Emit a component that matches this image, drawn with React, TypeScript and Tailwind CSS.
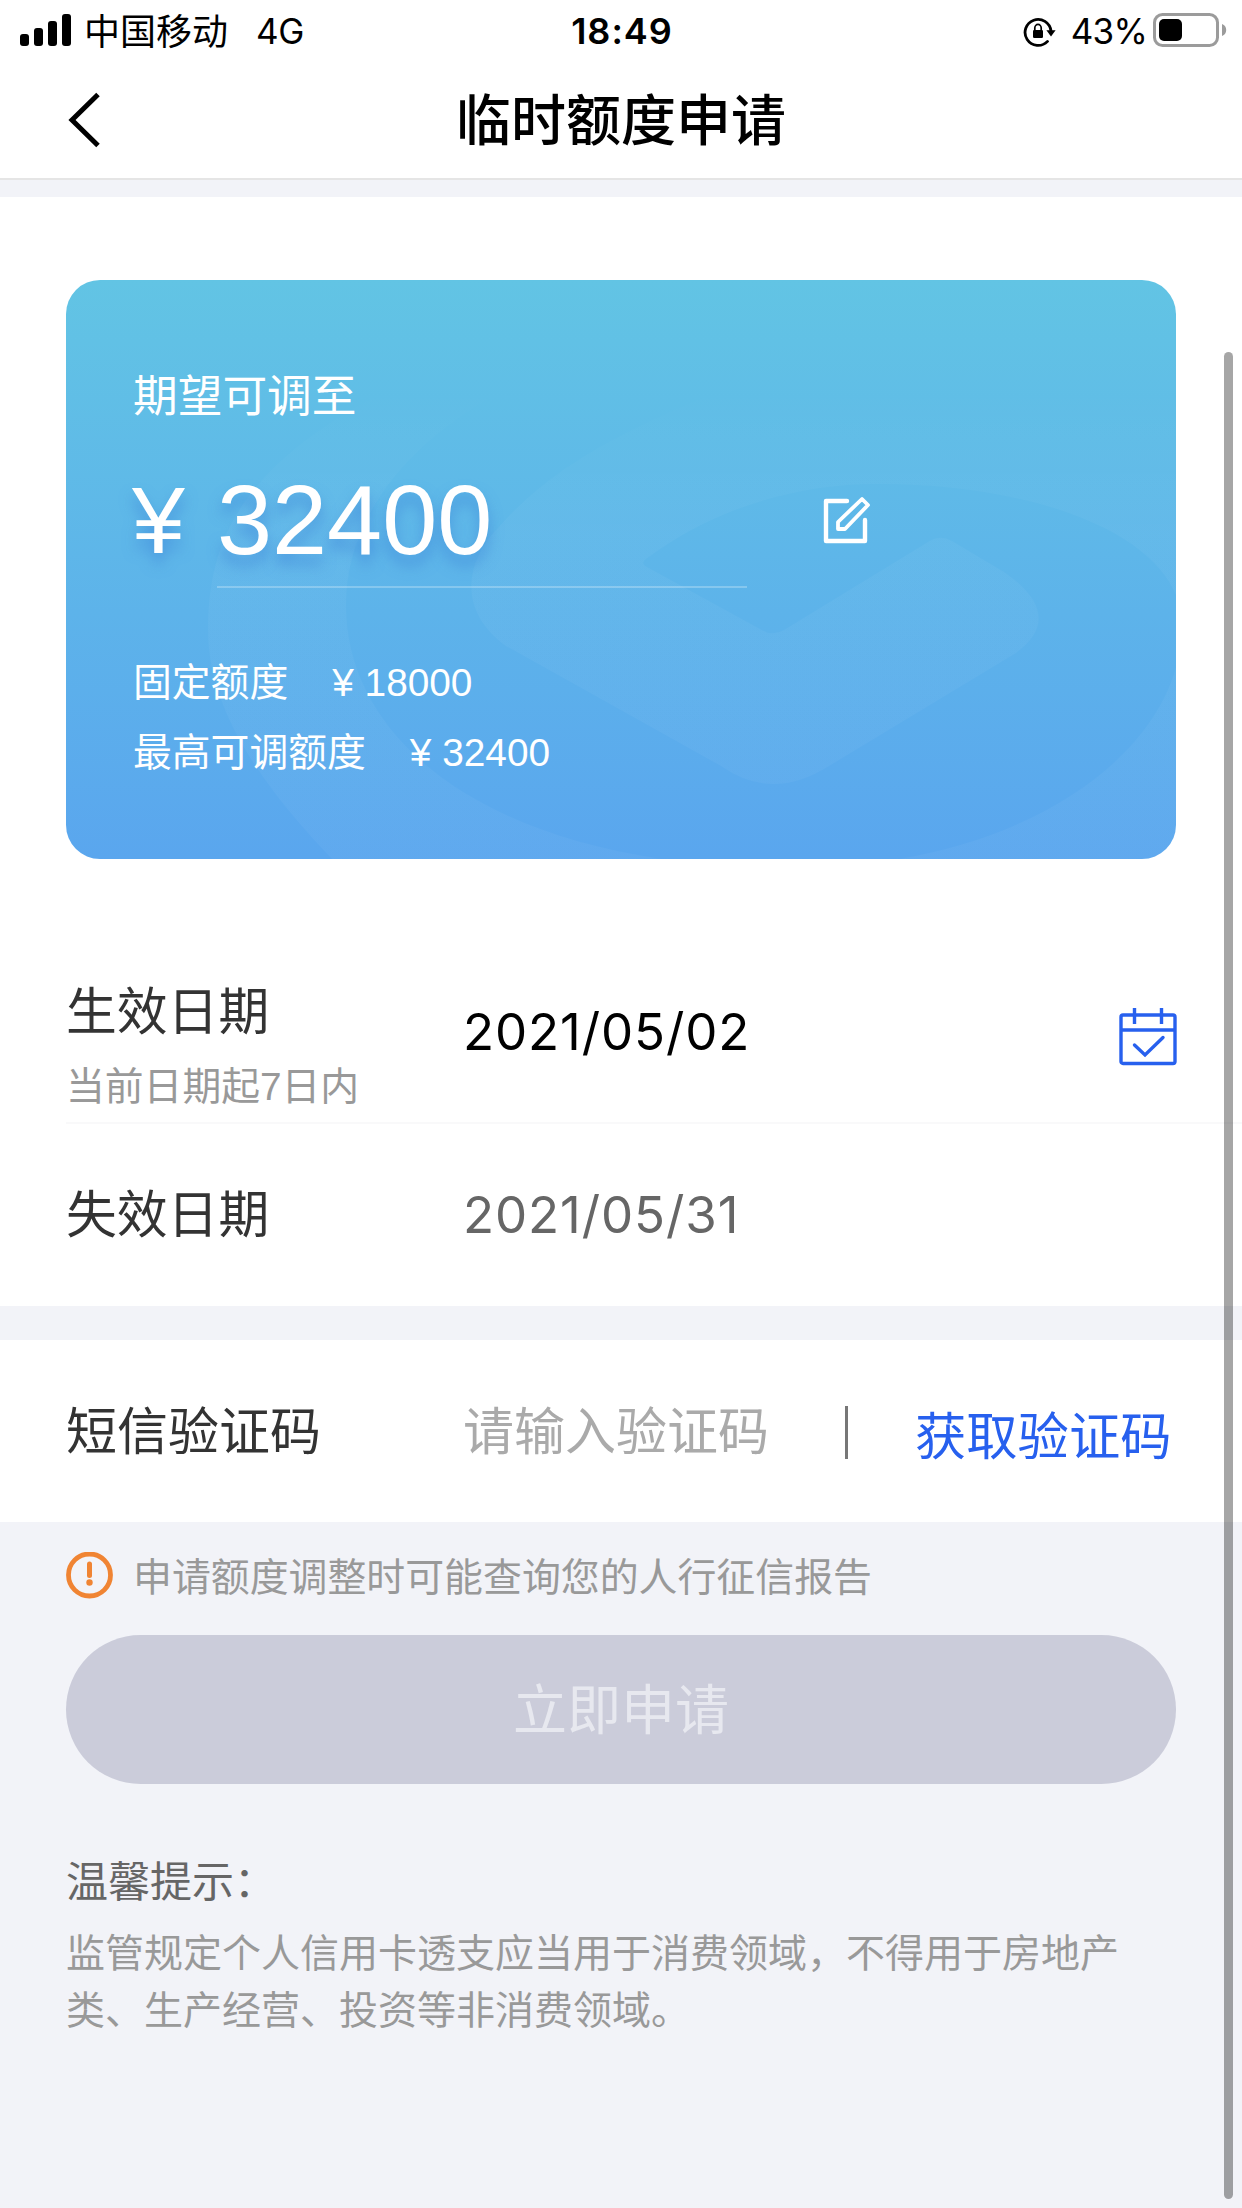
import React, { useState } from 'react';

function StatusBar() {
  return (
    <div className="h-[62px] shrink-0 flex items-center justify-between pl-5 pr-[15px] text-[36px] leading-[44px] text-black">
      <div className="w-[540px] flex items-center">
        <div className="flex items-end gap-[5px] h-8 -mt-0.5">
          <span className="w-[9px] h-3 rounded-[3px] bg-black" />
          <span className="w-[9px] h-[18px] rounded-[3px] bg-black" />
          <span className="w-[9px] h-[25px] rounded-[3px] bg-black" />
          <span className="w-[9px] h-8 rounded-[3px] bg-black" />
        </div>
        <span className="ml-[13px] pt-[3px]">中国移动</span>
        <span className="ml-[28px] font-['Inter',sans-serif] text-[35px] tracking-[-0.5px]">4G</span>
      </div>
      <span className="pr-[3px] font-['Inter',sans-serif] text-[36px] font-semibold tracking-[1px]">18:49</span>
      <div className="w-[540px] flex items-center justify-end">
        <svg width="33" height="31" viewBox="0 0 33 31" fill="none">
          <path d="M24.5 25.4A13 13 0 1 1 28 15" stroke="black" strokeWidth="2.8" strokeLinecap="round" />
          <path d="M23.4 14.2h9.2L28 20.6z" fill="black" />
          <rect x="10" y="14" width="10" height="8" rx="1.2" fill="black" />
          <path d="M11.8 15v-3a3.2 3.6 0 0 1 6.4 0v3" stroke="black" strokeWidth="1.7" />
        </svg>
        <span className="ml-[15px] font-['Inter',sans-serif] text-[35px] tracking-[-0.8px]">43%</span>
        <svg className="ml-[6px] -mt-0.5" width="74" height="34" viewBox="0 0 74 34" fill="none">
          <rect x="1.5" y="1.5" width="63" height="31" rx="8" stroke="#9b9b9b" strokeWidth="3" />
          <rect x="6" y="6" width="23" height="22" rx="5" fill="black" />
          <path d="M69 11a6.4 6.4 0 0 1 0 12z" fill="#9b9b9b" />
        </svg>
      </div>
    </div>
  );
}

function Header() {
  return (
    <div className="h-[118px] shrink-0 flex items-center px-[66px] border-b-2 border-[#e5e5e5]">
      <button className="w-10 h-[56px]">
        <svg width="36" height="56" viewBox="0 0 36 56" fill="none">
          <path d="M32 2.5L6 28 32 53.5" stroke="black" strokeWidth="5" />
        </svg>
      </button>
      <h1 className="flex-1 pr-10 pt-[2px] text-center text-[55px] leading-[64px] font-medium text-black">临时额度申请</h1>
    </div>
  );
}

// Faint logo behind the card content, faded out towards the top
function CardWatermark() {
  return (
    <svg className="absolute inset-0" width="1110" height="579" viewBox="0 0 1110 579">
      <defs>
        <linearGradient id="fade" x1="0" y1="0" x2="0" y2="1">
          <stop offset="0.18" stopColor="white" stopOpacity="0" />
          <stop offset="0.42" stopColor="white" stopOpacity="0.035" />
          <stop offset="1" stopColor="white" stopOpacity="0.035" />
        </linearGradient>
      </defs>
      <path
        fill="url(#fade)"
        fillRule="evenodd"
        d="M0 0H1110V579H266C190 500 142 425 142 350C142 245 190 180 320 110L420 0H0Z
           M540 70C370 120 280 220 280 325C280 470 440 588 724 588C960 588 1116 470 1116 345C1116 260 980 204 812 204C720 204 640 234 580 279Q574 283 581 287L694 349Q706 357 718 350L862 262Q874 254 886 261L938 292C982 322 982 350 950 373L763 486Q706 522 655 486L440 366C390 330 400 280 433 247C500 170 600 130 760 70Z"
      />
    </svg>
  );
}

function QuotaCard() {
  return (
    <div className="relative h-[579px] mx-[66px] rounded-[34px] overflow-hidden bg-gradient-to-b from-[#62c4e4] to-[#5aa6ee] text-white">
      <CardWatermark />
      <div className="relative pl-[67px] pt-[87px]">
        <p className="text-[44.7px] leading-[60px]">期望可调至</p>
        <div className="mt-[25px] flex items-center">
          <span className="w-[84px] -ml-px mr-px text-[95px] leading-[132px] [text-shadow:0_10px_14px_rgba(60,130,215,0.6)]">¥</span>
          <div className="w-[530px] h-[136px] border-b-2 border-white/25">
            <span className="text-[99px] leading-[136px] [text-shadow:0_10px_14px_rgba(60,130,215,0.6)]">32400</span>
          </div>
          <button className="ml-[75px]">
            <svg width="50" height="50" viewBox="0 0 50 50" fill="none" stroke="white" strokeWidth="4.4" strokeLinecap="round" strokeLinejoin="round">
              <path d="M25 6H4v40h39V25" />
              <path d="M16 34v-7L40 4l6 6-23 24z" strokeWidth="3.8" />
            </svg>
          </button>
        </div>
        <p className="mt-[65px] flex text-[38.8px] leading-[60px]">
          固定额度<span className="ml-[44px]">¥ 18000</span>
        </p>
        <p className="mt-[10px] flex text-[38.8px] leading-[60px]">
          最高可调额度<span className="ml-[44px]">¥ 32400</span>
        </p>
      </div>
    </div>
  );
}

function CalendarIcon() {
  return (
    <svg width="58" height="58" viewBox="0 0 58 58" fill="none" stroke="#2760ee" strokeWidth="3.4">
      <rect x="2" y="7" width="54" height="48.5" rx="2" />
      <path d="M2 22h54M15.5 0v16M42.5 0v16" />
      <path d="M15.5 37l10.5 10 18-17.5" strokeLinecap="round" />
    </svg>
  );
}

export default function App() {
  const [code, setCode] = useState('');

  return (
    <div className="relative w-[1242px] h-[2208px] overflow-hidden flex flex-col bg-white font-['Liberation_Sans','Noto_Sans_CJK_SC',sans-serif]">
      <StatusBar />
      <Header />

      <main className="flex-1 bg-[#f2f3f8] pt-[17px]">
        <section className="bg-white pt-[83px]">
          <QuotaCard />

          <div className="ml-[66px] h-[265px] pt-[124px] pr-[65px] flex items-start border-b-2 border-[#f9f9fa]">
            <div className="w-[397px] shrink-0">
              <p className="text-[50.8px] leading-[60px] text-[#333]">生效日期</p>
              <p className="mt-5 text-[38.8px] leading-[48px] text-[#999]">当前日期起7日内</p>
            </div>
            <span className="mt-[19px] flex-1 font-['Inter',sans-serif] text-[51px] leading-[60px] tracking-[0.9px] text-black">2021/05/02</span>
            <button className="mt-[25px]">
              <CalendarIcon />
            </button>
          </div>
          <div className="ml-[66px] h-[182px] flex items-center">
            <p className="w-[397px] pt-[2px] text-[50.8px] leading-[60px] text-[#333]">失效日期</p>
            <span className="font-['Inter',sans-serif] text-[51px] leading-[60px] tracking-[0.9px] text-[#666]">2021/05/31</span>
          </div>
        </section>

        <section className="mt-[34px] h-[182px] pl-[66px] flex items-center bg-white text-[51px] leading-[60px]">
          <label className="w-[397px] pt-[3px] text-[#333]">短信验证码</label>
          <input
            value={code}
            onChange={(e) => setCode(e.target.value)}
            placeholder="请输入验证码"
            className="w-[382px] h-[64px] pt-[3px] outline-none placeholder:text-[#aaa] placeholder:opacity-100"
          />
          <span className="mt-[3px] w-[3px] h-[53px] bg-[#777]" />
          <button className="ml-[67px] pt-[13px] text-[51.3px] text-[#2760ee]">获取验证码</button>
        </section>

        <div className="pt-[30px] px-[66px]">
          <div className="h-[47px] flex items-center">
            <svg width="47" height="47" viewBox="0 0 47 47" fill="none" stroke="#f08433">
              <circle cx="23.5" cy="23" r="21" strokeWidth="4.8" />
              <path d="M23.5 12v11.5" strokeWidth="5" strokeLinecap="round" />
              <circle cx="23.5" cy="30.5" r="3.2" fill="#f08433" stroke="none" />
            </svg>
            <p className="ml-[20px] pt-[4px] text-[38.9px] leading-[46px] text-[#999]">申请额度调整时可能查询您的人行征信报告</p>
          </div>
          <button disabled className="mt-[36px] w-full h-[149px] pt-[3px] rounded-full bg-[#cbccda] text-[54px] text-[#e7e8ef]">
            立即申请
          </button>
          <h2 className="mt-[70px] text-[42px] leading-[57px] text-[#666]">温馨提示：</h2>
          <p className="mt-[14px] text-[39px] leading-[57px] text-[#999]">
            监管规定个人信用卡透支应当用于消费领域，不得用于房地产类、生产经营、投资等非消费领域。
          </p>
        </div>
      </main>

      {/* scroll indicator */}
      <div className="absolute left-[1224px] top-[352px] w-[9px] h-[1847px] rounded-full bg-black/35" />
    </div>
  );
}
